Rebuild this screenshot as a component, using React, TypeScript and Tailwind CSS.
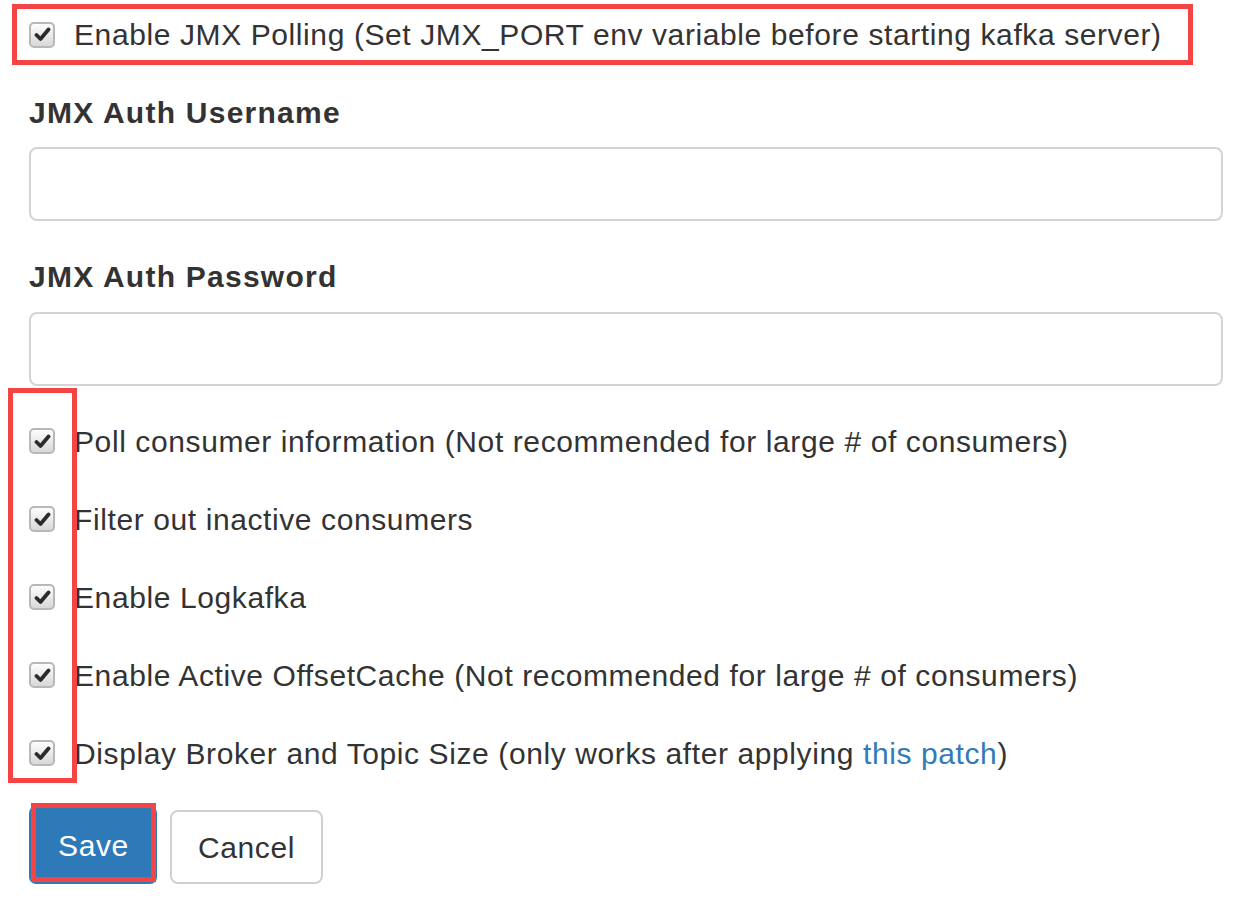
import React from "react";

function Check() {
  return (
    <span className="flex h-[26px] w-[26px] shrink-0 items-center justify-center rounded-[5px] border-2 border-[#b8b8b8] bg-gradient-to-b from-[#fdfdfd] to-[#d8d8d8]">
      <svg width="17" height="15" viewBox="0 0 17 15" fill="none">
        <path d="M2.5 8 L6.5 12 L14.5 2.5" stroke="#2b2b2b" strokeWidth="3.8" strokeLinecap="round" strokeLinejoin="round" />
      </svg>
    </span>
  );
}

function Row({ children }: { children: React.ReactNode }) {
  return (
    <div className="flex h-[78px] items-center gap-[19px] pl-[29px]">
      <Check />
      <span>{children}</span>
    </div>
  );
}

export default function App() {
  return (
    <div className="h-[898px] w-[1246px] overflow-hidden bg-white text-[30px] tracking-[0.6px] text-[#333] font-['Liberation_Sans',Arial,sans-serif]">
      {/* JMX toggle, boxed in red */}
      <div className="ml-[12px] mt-[4px] flex h-[61px] w-[1181px] items-center gap-[19px] border-[5px] border-[#f44444] pl-[12px]">
        <Check />
        <span>Enable JMX Polling (Set JMX_PORT env variable before starting kafka server)</span>
      </div>

      <div className="pl-[29px] pr-[23px]">
        <div className="mt-[30px] font-bold leading-[36px] tracking-[1.25px]">JMX Auth Username</div>
        <div className="mt-[16px] h-[74px] rounded-[8px] border-2 border-[#d4d4d4]" />
        <div className="mt-[38px] font-bold leading-[36px] tracking-[1.25px]">JMX Auth Password</div>
        <div className="mt-[17px] h-[74px] rounded-[8px] border-2 border-[#d4d4d4]" />
      </div>

      {/* checkbox list with red annotation */}
      <div className="relative mt-[16px]">
        <div className="absolute left-[8px] top-[-14px] h-[395px] w-[69px] border-[5px] border-[#f44444]" />
        <Row>Poll consumer information (Not recommended for large # of consumers)</Row>
        <Row>Filter out inactive consumers</Row>
        <Row>Enable Logkafka</Row>
        <Row>Enable Active OffsetCache (Not recommended for large # of consumers)</Row>
        <Row>
          Display Broker and Topic Size (only works after applying{" "}
          <a className="text-[#337ab7]">this patch</a>)
        </Row>
      </div>

      <div className="mt-[14px] flex gap-[13px] pl-[29px]">
        <div className="relative h-[78px] w-[128px] rounded-[7px] bg-[#2e7ab8]">
          <div className="absolute left-[2px] top-[-3px] flex h-[79px] w-[125px] items-center justify-center border-[5px] border-[#f44444] pt-[6px] text-white">
            Save
          </div>
        </div>
        <div className="mt-[4px] flex h-[74px] w-[153px] items-center justify-center rounded-[8px] border-2 border-[#d0d0d0]">
          Cancel
        </div>
      </div>
    </div>
  );
}
